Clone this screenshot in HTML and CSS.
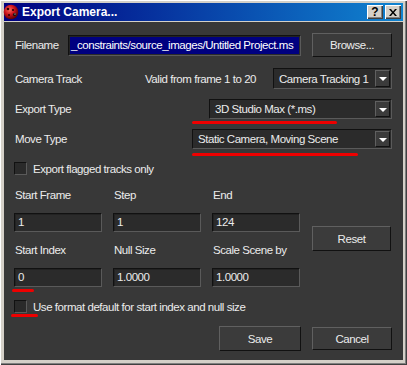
FILE: index.html
```html
<!DOCTYPE html>
<html lang="en">
<head>
    <meta charset="UTF-8">
    <title>Export Camera...</title>
    <link rel="stylesheet" href="styles.css">
</head>
<body>
    <div class="window">
        <div class="titlebar">
            <svg class="app-icon" width="16" height="16" viewBox="0 0 16 16">
                <defs>
                    <radialGradient id="bug" cx="0.4" cy="0.35" r="0.7">
                        <stop offset="0" stop-color="#ff6a5a"/>
                        <stop offset="0.5" stop-color="#c8101a"/>
                        <stop offset="1" stop-color="#4a0000"/>
                    </radialGradient>
                </defs>
                <circle cx="8" cy="8" r="7.3" fill="url(#bug)"/>
                <circle cx="5" cy="5" r="1.3" fill="#2a0000"/>
                <circle cx="10" cy="6" r="1.1" fill="#2a0000"/>
                <circle cx="11.5" cy="10.5" r="1.6" fill="#111"/>
                <circle cx="12" cy="10" r="0.6" fill="#fff"/>
                <circle cx="6" cy="11" r="1" fill="#2a0000"/>
            </svg>
            <span class="title">Export Camera...</span>
            <div class="caption-btns">
                <span class="cap-btn">?</span>
                <span class="cap-btn">
                    <svg width="8" height="7" viewBox="0 0 8 7"><path d="M0 0h2l2 2.5L6 0h2L5 3.5 8 7H6L4 4.5 2 7H0l3-3.5z" fill="#000"/></svg>
                </span>
            </div>
        </div>

        <div class="content">
            <div class="row row-file">
                <span class="label lbl-file">Filename</span>
                <div class="field field-file"><span class="selected">_constraints/source_images/Untitled Project.ms</span></div>
                <button class="btn btn-browse">Browse...</button>
            </div>

            <div class="row row-track">
                <span class="label lbl-track">Camera Track</span>
                <span class="label">Valid from frame 1 to 20</span>
                <div class="combo combo-track"><span class="combo-text">Camera Tracking 1</span><span class="combo-arrow"></span></div>
            </div>

            <div class="row row-combo">
                <span class="label">Export Type</span>
                <div class="combo combo-export"><span class="combo-text">3D Studio Max (*.ms)</span><span class="combo-arrow"></span></div>
            </div>

            <div class="row row-combo">
                <span class="label">Move Type</span>
                <div class="combo combo-move"><span class="combo-text">Static Camera, Moving Scene</span><span class="combo-arrow"></span></div>
            </div>

            <div class="row row-check check-flagged">
                <span class="checkbox"></span>
                <span class="label">Export flagged tracks only</span>
            </div>

            <div class="fields">
                <span class="label">Start Frame</span>
                <span class="label">Step</span>
                <span class="label">End</span>
                <span></span>

                <div class="field">1</div>
                <div class="field">1</div>
                <div class="field">124</div>
                <button class="btn btn-reset">Reset</button>

                <span class="label">Start Index</span>
                <span class="label">Null Size</span>
                <span class="label">Scale Scene by</span>

                <div class="field">0</div>
                <div class="field">1.0000</div>
                <div class="field">1.0000</div>
            </div>

            <div class="row row-check check-default">
                <span class="checkbox"></span>
                <span class="label">Use format default for start index and null size</span>
            </div>

            <div class="row row-actions">
                <button class="btn btn-save">Save</button>
                <button class="btn btn-cancel">Cancel</button>
            </div>

            <!-- red marks drawn over the dialog -->
            <span class="mark mark-export"></span>
            <span class="mark mark-move"></span>
            <span class="mark mark-index"></span>
            <span class="mark mark-check"></span>
        </div>
    </div>
</body>
</html>
```

FILE: styles.css
```css
:root {
    --frame: #d4d0c8;
    --panel: #383838;
    --text: #ececec;
    --field: #2b2b2b;
    --button: #3b3b3b;
    --mark: #ee0000;
}
body {
    margin: 0;
    font-family: 'Liberation Sans', Arial, sans-serif;
    font-size: 11.5px;
    letter-spacing: -0.45px;
    background: var(--frame);
}
.window {
    width: 407px;
    height: 365px;
    box-sizing: border-box;
    padding: 3px 4px 5px 4px;
    background: var(--frame);
    box-shadow: inset 1px 1px #fff, inset -1px -1px #404040, inset -2px -2px #808080;
    display: flex;
    flex-direction: column;
}
.titlebar {
    height: 18px;
    margin-bottom: 1px;
    display: flex;
    align-items: center;
    background: linear-gradient(to right, #000080, #1084d0);
    color: #fff;
}
.app-icon {
    margin: 0 3px 0 -1px;
}
.title {
    font-weight: bold;
    font-size: 12px;
    letter-spacing: 0;
}
.caption-btns {
    margin-left: auto;
    margin-right: 2px;
    display: flex;
    gap: 2px;
}
.cap-btn {
    width: 16px;
    height: 14px;
    box-sizing: border-box;
    background: var(--frame);
    color: #000;
    font-weight: bold;
    font-size: 12px;
    letter-spacing: 0;
    display: flex;
    align-items: center;
    justify-content: center;
    box-shadow: inset 1px 1px #fff, inset -1px -1px #404040, inset -2px -2px #808080;
}
.content {
    flex: 1;
    position: relative;
    background: var(--panel);
    color: var(--text);
    padding: 0 11px 0 10px;
}
.row {
    display: flex;
    align-items: center;
}
.label {
    white-space: nowrap;
    padding-left: 1px;
}
.field {
    box-sizing: border-box;
    height: 19px;
    background: var(--field);
    border: 1px solid;
    border-color: #111 #5a5a5a #5a5a5a #111;
    box-shadow: inset 1px 1px #222;
    padding: 1px 3px;
    line-height: 15px;
    overflow: hidden;
    white-space: nowrap;
}
.btn {
    box-sizing: border-box;
    background: var(--button);
    color: var(--text);
    font-family: inherit;
    font-size: inherit;
    letter-spacing: inherit;
    border: 1px solid;
    border-color: #606060 #111 #111 #606060;
    padding: 0;
}
.row-file {
    margin-top: 11px;
    height: 24px;
}
.lbl-file {
    width: 53px;
}
.field-file {
    width: 233px;
    height: 21px;
    padding: 1px;
}
.selected {
    display: block;
    height: 100%;
    background: #000080;
    color: #fff;
    padding-left: 1px;
    line-height: 17px;
}
.btn-browse {
    margin-left: auto;
    width: 80px;
    height: 24px;
}
.row-track {
    margin-top: 11px;
    height: 21px;
}
.lbl-track {
    width: 129px;
}
.combo {
    margin-left: auto;
    box-sizing: border-box;
    height: 21px;
    display: flex;
    align-items: center;
    background: var(--field);
    border: 1px solid;
    border-color: #111 #5a5a5a #5a5a5a #111;
    padding: 1px;
}
.combo-text {
    flex: 1;
    padding-left: 4px;
    white-space: nowrap;
}
.combo-arrow {
    width: 15px;
    height: 100%;
    box-sizing: border-box;
    background: var(--button);
    border: 1px solid;
    border-color: #606060 #111 #111 #606060;
    position: relative;
}
.combo-arrow::after {
    content: "";
    position: absolute;
    left: 3px;
    top: 6px;
    border-left: 4px solid transparent;
    border-right: 4px solid transparent;
    border-top: 4px solid #fff;
}
.combo-track {
    width: 119px;
}
.row-combo {
    margin-top: 10px;
    height: 20px;
}
.row-combo .combo {
    height: 20px;
}
.combo-export {
    width: 183px;
}
.combo-move {
    width: 200px;
}
.row-check {
    height: 13px;
}
.check-flagged {
    margin-top: 13px;
}
.checkbox {
    width: 13px;
    height: 13px;
    box-sizing: border-box;
    background: #2a2a2a;
    border: 1px solid;
    border-color: #111 #5a5a5a #5a5a5a #111;
    margin-right: 5px;
}
.fields {
    margin-top: 13px;
    display: grid;
    grid-template-columns: 88px 88px 88px 80px;
    grid-template-rows: 14px 19px 14px 19px;
    column-gap: 11px;
    row-gap: 11px;
    align-items: center;
}
.fields .label {
    line-height: 14px;
}
.btn-reset {
    grid-column: 4;
    grid-row: 2 / 4;
    align-self: start;
    margin: 13px 0 0 1px;
    height: 25px;
}
.check-default {
    margin-top: 13px;
}
.row-actions {
    margin-top: 13px;
    justify-content: flex-end;
    gap: 11px;
    height: 25px;
}
.btn-save {
    width: 82px;
    height: 25px;
}
.btn-cancel {
    width: 80px;
    height: 23px;
}
.mark {
    position: absolute;
    height: 3px;
    border-radius: 2px;
    background: var(--mark);
}
.mark-export {
    left: 188px;
    top: 99px;
    width: 145px;
}
.mark-move {
    left: 188px;
    top: 131px;
    width: 166px;
}
.mark-index {
    left: 8px;
    top: 267px;
    width: 22px;
}
.mark-check {
    left: 7px;
    top: 292px;
    width: 27px;
}
```
